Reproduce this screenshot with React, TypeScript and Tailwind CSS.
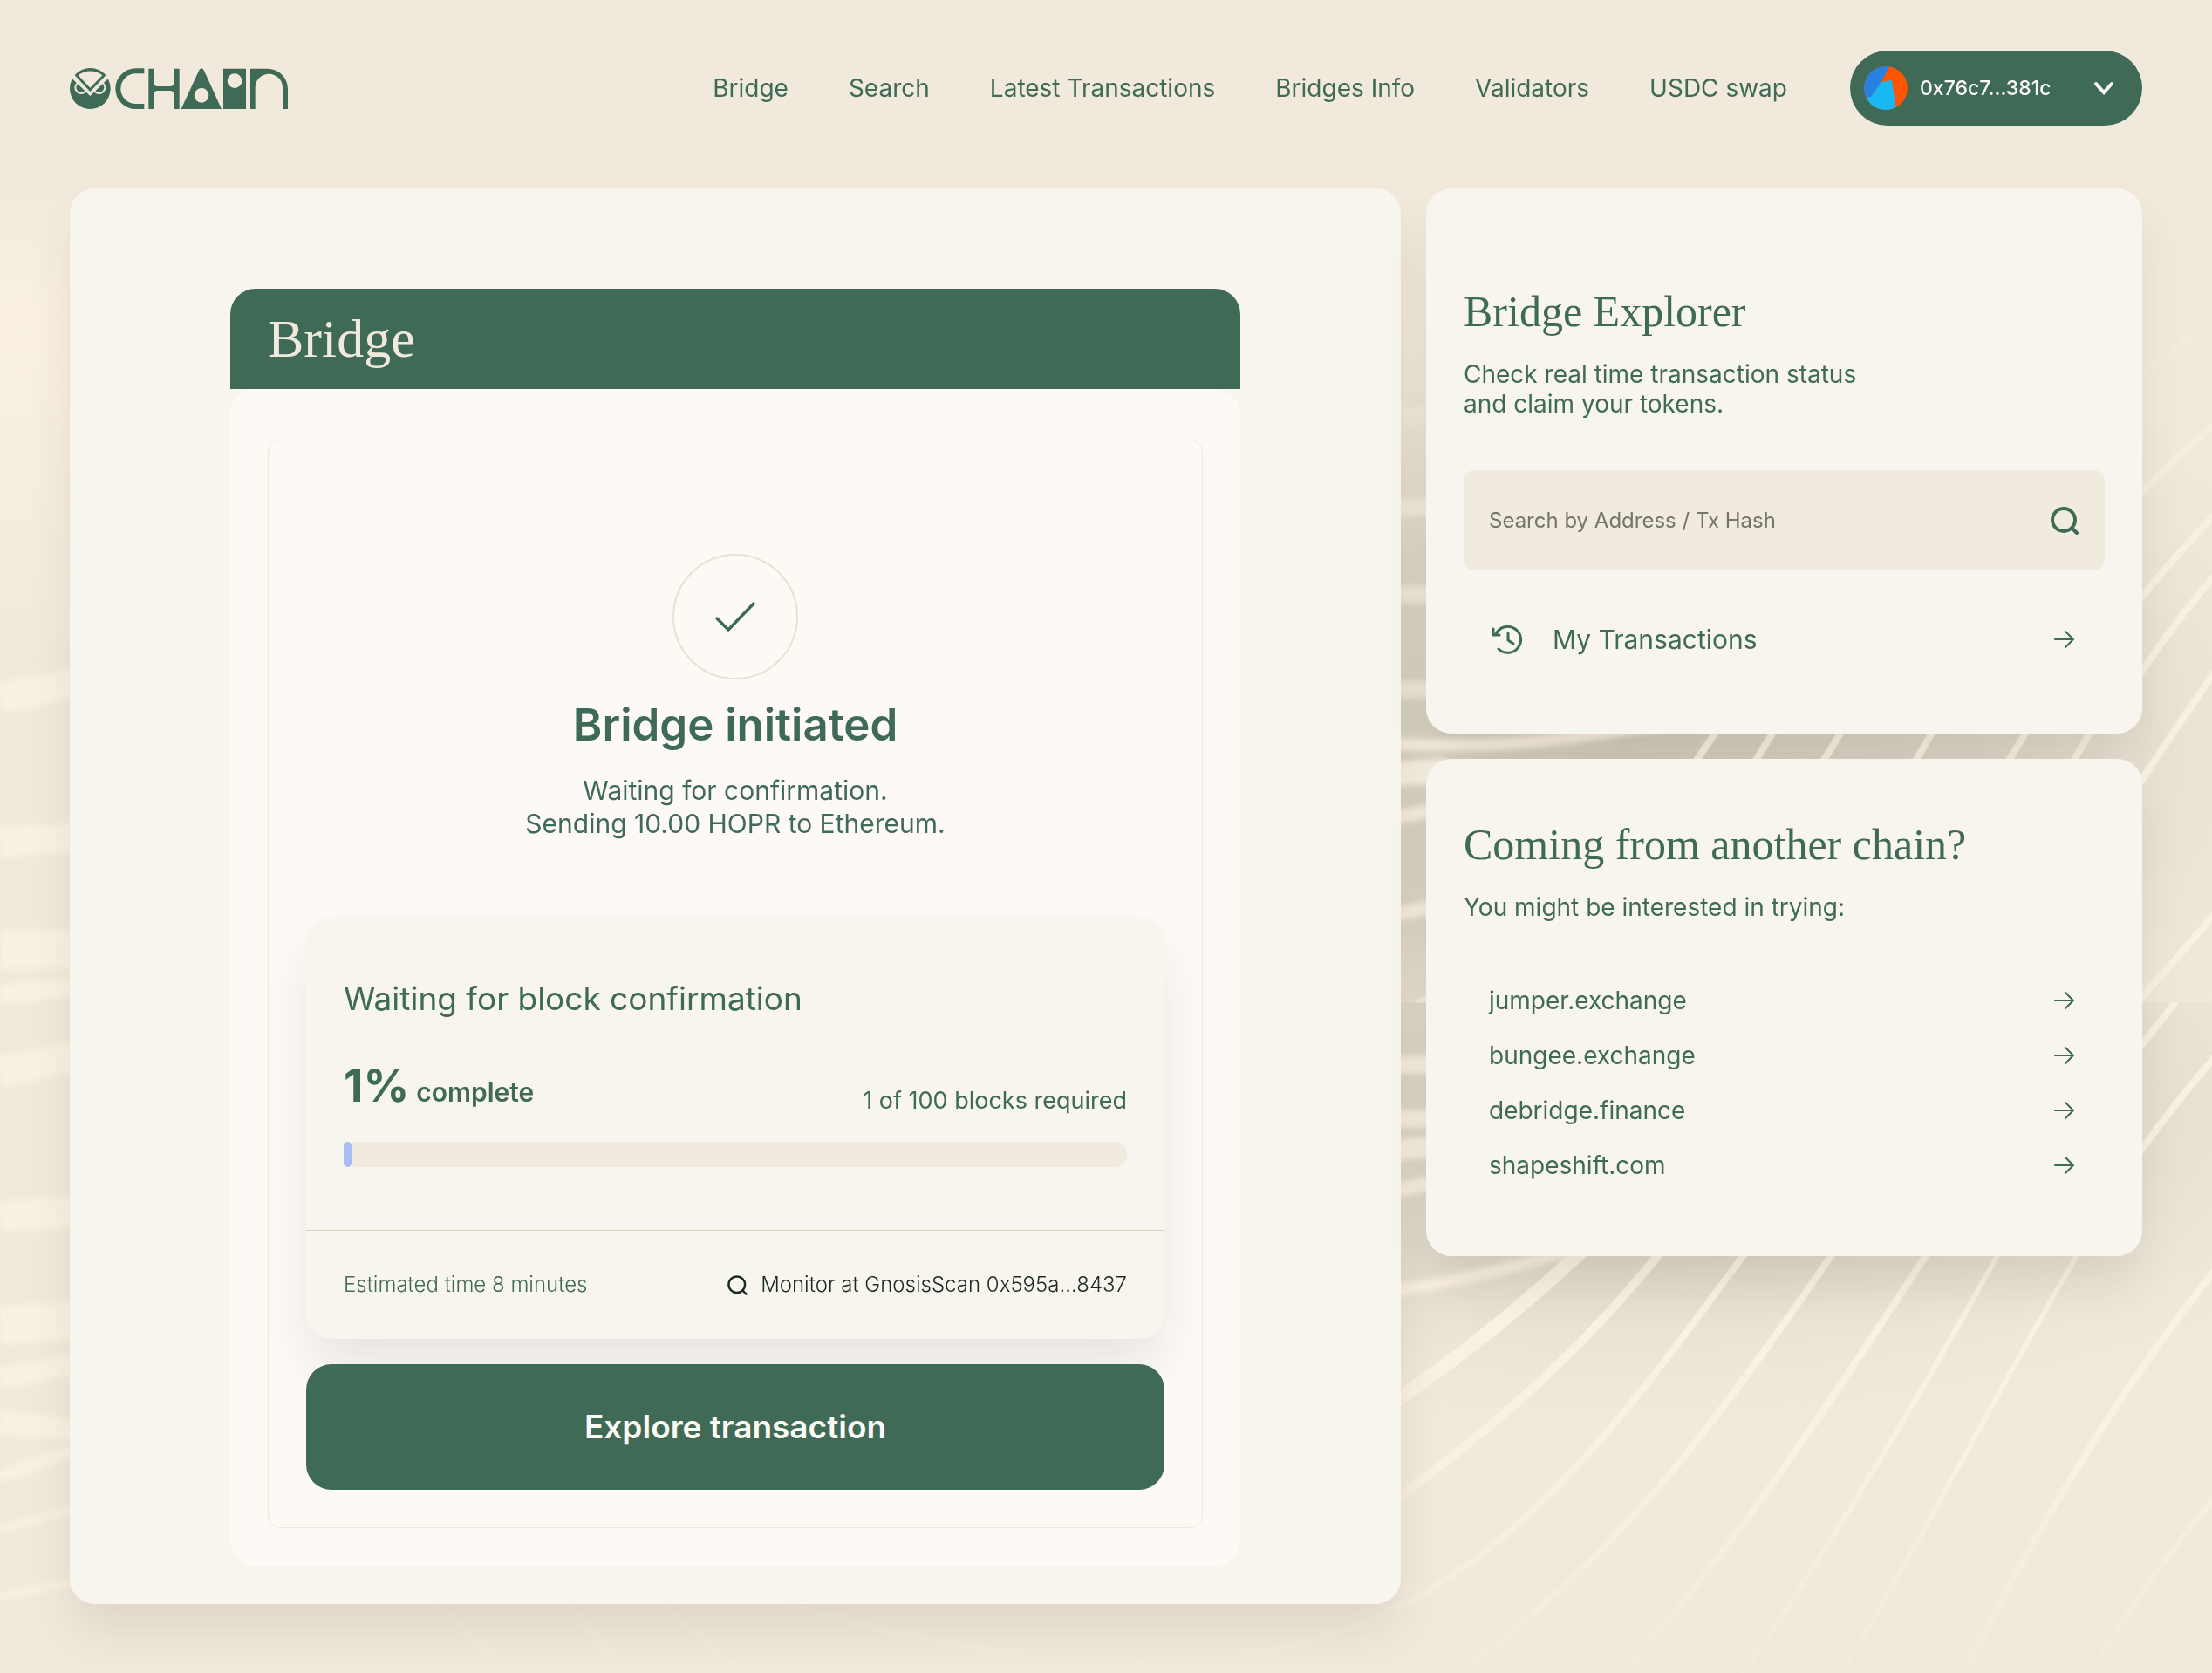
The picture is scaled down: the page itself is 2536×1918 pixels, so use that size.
import React from "react";

const navLinks = ["Bridge", "Search", "Latest Transactions", "Bridges Info", "Validators", "USDC swap"];
const exchanges = ["jumper.exchange", "bungee.exchange", "debridge.finance", "shapeshift.com"];

function Backdrop() {
  return (
    <svg
      className="absolute inset-0 h-full w-full"
      viewBox="0 0 2536 1918"
      preserveAspectRatio="xMidYMin slice"
      aria-hidden="true"
    >
      <defs>
        <radialGradient id="shadeA">
          <stop offset="0" stopColor="#c9c4b5" stopOpacity="0.85" />
          <stop offset="0.5" stopColor="#cfc9bb" stopOpacity="0.6" />
          <stop offset="1" stopColor="#e6dfd0" stopOpacity="0" />
        </radialGradient>
        <linearGradient id="fadeLines" x1="0" y1="0" x2="0" y2="1918" gradientUnits="userSpaceOnUse">
          <stop offset="0.14" stopColor="#f9f1e3" stopOpacity="0" />
          <stop offset="0.34" stopColor="#f9f1e3" stopOpacity="0.9" />
          <stop offset="0.85" stopColor="#f9f1e3" stopOpacity="1" />
          <stop offset="1" stopColor="#f7efe1" stopOpacity="0.3" />
        </linearGradient>
        <linearGradient id="warm" x1="0" y1="0" x2="0" y2="1">
          <stop offset="0" stopColor="#faf1e2" stopOpacity="0" />
          <stop offset="0.3" stopColor="#faf1e2" stopOpacity="0.9" />
          <stop offset="1" stopColor="#faf1e2" stopOpacity="0" />
        </linearGradient>
        <filter id="soft" x="-10%" y="-10%" width="120%" height="120%">
          <feGaussianBlur stdDeviation="3" />
        </filter>
        <clipPath id="upper">
          <rect x="0" y="0" width="2536" height="1149" />
        </clipPath>
        <clipPath id="lower">
          <rect x="0" y="1149" width="2536" height="769" />
        </clipPath>
      </defs>
      <rect width="2536" height="1918" fill="#f1eadc" />
      <rect y="200" width="80" height="560" fill="url(#warm)" />
      <g clipPath="url(#upper)">
        <ellipse cx="1860" cy="850" rx="880" ry="520" fill="url(#shadeA)" />
      </g>
      <g clipPath="url(#lower)">
        <ellipse cx="1860" cy="1260" rx="1000" ry="380" fill="url(#shadeA)" opacity="0.8" />
      </g>
      <g filter="url(#soft)" fill="none" stroke="#faf2e4" opacity="0.85">
        <path d="M0 800L90 782" strokeWidth="34" />
        <path d="M0 965L90 960" strokeWidth="34" />
        <path d="M0 1088L90 1088" strokeWidth="44" />
        <path d="M0 1140L90 1130" strokeWidth="22" />
        <path d="M0 1228L90 1210" strokeWidth="34" />
        <path d="M0 1394L90 1388" strokeWidth="34" />
        <path d="M0 1518L90 1514" strokeWidth="44" />
        <path d="M0 1580L90 1562" strokeWidth="24" />
        <path d="M0 1630L90 1638" strokeWidth="26" />
        <path d="M0 1692L90 1660" strokeWidth="14" />
        <path d="M0 1752L90 1728" strokeWidth="8" />
        <path d="M0 1830L90 1812" strokeWidth="8" />
        <path d="M1600 476h50" strokeWidth="20" opacity="0.4" />
        <path d="M1600 581h50M1600 681h50M1600 790h50" strokeWidth="20" opacity="0.75" />
        <path d="M1590 852Q1700 858 1800 845T1960 820" strokeWidth="14" />
        <path d="M1590 888L1660 882" strokeWidth="28" />
        <path d="M1590 938L1650 928M1590 1049L1650 1038" strokeWidth="16" />
        <path d="M1590 1220h60M1590 1282h60" strokeWidth="20" />
        <path d="M1590 1319L1650 1313" strokeWidth="24" />
        <path d="M1590 1366L1650 1354" strokeWidth="16" />
        <path d="M1590 1480Q1700 1465 1820 1426" strokeWidth="14" />
      </g>
      <g fill="none" stroke="url(#fadeLines)" strokeWidth="8">
        <path d="M2440 440Q2490 400 2540 368" />
        <path d="M2440 580Q2490 525 2540 486" />
        <path d="M2440 702Q2490 640 2540 588" />
        <path d="M2440 792Q2490 715 2540 658" />
        <path d="M2440 916Q2490 840 2540 768" />
        <path d="M1973 830L1935 885M2038 830L2004 885M2116 830L2082 885M2220 830L2188 885M2328 830L2294 885M2401 830L2369 885" />
        <path d="M2440 1160L2540 1046" clipPath="url(#upper)" />
        <path d="M1620 1149L1640 1136V1149Z" fill="#f9f1e3" stroke="none" opacity="0.6" />
        <path d="M2500 1140L2440 1216" clipPath="url(#lower)" />
        <path d="M2540 1209Q2480 1280 2440 1338" />
        <path d="M1600 1605Q1710 1530 1815 1432" strokeWidth="16" />
        <path d="M1600 1718C1720 1630 1820 1540 1902 1436" strokeWidth="10" />
        <path d="M1600 1843C1760 1765 1880 1600 2000 1436" />
        <path d="M1670 1918C1850 1790 1960 1640 2101 1436" />
        <path d="M1858 1918C1975 1790 2070 1650 2209 1436" />
        <path d="M1998 1918C2100 1770 2200 1600 2291 1436" strokeWidth="6" />
        <path d="M2110 1918C2200 1770 2280 1610 2382 1436" strokeWidth="6" />
        <path d="M2250 1918C2330 1760 2430 1590 2540 1454" />
        <path d="M2395 1918Q2460 1810 2540 1714" strokeWidth="6" />
        <path d="M500 1838L590 1918M650 1838L720 1918M760 1838L850 1918M900 1838Q1360 1970 1606 1838" opacity="0.6" />
      </g>
    </svg>
  );
}

function Logo() {
  return (
    <svg className="h-[47px] w-[250px]" viewBox="60 80 750 141" role="img" aria-label="0CHAIN">
      <g fill="#3f6a56">
        <circle cx="130" cy="151" r="70" />
        <g stroke="#f1eadc" strokeWidth="6">
          <circle cx="99" cy="147" r="20" />
          <circle cx="161" cy="147" r="20" />
        </g>
        <path d="M64 106L130 170L196 106" fill="none" stroke="#f1eadc" strokeWidth="9" />
        <path d="M60 70H200V100L130 164L60 100Z" fill="#f1eadc" />
        <path d="M77 105C105 72 156 72 184 105L130 161Z" />
        <path d="M89 105C112 86 149 86 172 105L130 148Z" fill="#f1eadc" />
        <path d="M121 158L130 175L139 158L130 166Z" fill="#f1eadc" />
        <path d="M316 90H287A61 61 0 0 0 287 212H316" fill="none" stroke="#3f6a56" strokeWidth="18" />
        <path d="M331 82H348V128Q348 143 363 143H404Q419 143 419 128V82H437V221H419V173Q419 158 404 158H363Q348 158 348 173V221H331Z" />
        <path
          fillRule="evenodd"
          d="M443 221L505 87Q513 75 521 87L582 221ZM513 149A25 25 0 1 0 513 199A25 25 0 1 0 513 149Z"
        />
        <path fillRule="evenodd" d="M588 82H666V221H588ZM627 99A25 25 0 1 0 627 149A25 25 0 1 0 627 99Z" />
        <path d="M681 82H740A70 70 0 0 1 810 152V221H792V147A47 47 0 0 0 698 147V221H681Z" />
      </g>
    </svg>
  );
}

function Avatar() {
  return (
    <svg className="size-[50px]" viewBox="0 0 50 50" aria-hidden="true">
      <clipPath id="round">
        <circle cx="25" cy="25" r="25" />
      </clipPath>
      <g clipPath="url(#round)">
        <rect width="50" height="50" fill="#ff5500" />
        <path d="M0 0H29L20 18L8 36L0 40Z" fill="#2a80e0" />
        <path d="M20 18L32 16L37 50H0V36L8 35Z" fill="#18b8f2" />
      </g>
    </svg>
  );
}

function ArrowRight() {
  return (
    <svg className="size-6" viewBox="0 0 24 24" fill="none" stroke="currentColor" strokeWidth="2" aria-hidden="true">
      <path d="M1 12H22M13 3L22 12L13 21" strokeLinecap="round" strokeLinejoin="round" />
    </svg>
  );
}

function SearchIcon({ className }: { className: string }) {
  return (
    <svg className={className} viewBox="0 0 32 32" fill="none" stroke="currentColor" aria-hidden="true">
      <circle cx="15" cy="15" r="13" />
      <path d="M24.500 24.500L30 30" strokeLinecap="round" />
    </svg>
  );
}

const shadow = "shadow-[0_34px_56px_-6px_rgba(60,50,30,0.11)]";

export default function App() {
  return (
    <div className="relative min-h-screen bg-[#f1eadc] font-['Inter',sans-serif] text-[#3f6a56]">
      <Backdrop />
      <div className="relative px-20 pb-20">
        <header className="flex items-center justify-between pt-[58px] pb-[72px]">
          <a href="#home">
            <Logo />
          </a>
          <div className="flex items-center gap-[72px]">
            <nav className="flex items-center gap-[69px] text-[28px] leading-9">
              {navLinks.map((label) => (
                <a key={label} href="#nav">
                  {label}
                </a>
              ))}
            </nav>
            <button className="flex h-[86px] w-[335px] items-center rounded-full bg-[#3f6a56] pr-8 pl-4 text-[#fdfaf5]">
              <Avatar />
              <span className="ml-3.5 text-[23px] font-medium">0x76c7...381c</span>
              <svg className="ml-auto size-6" viewBox="0 0 24 24" fill="none" stroke="currentColor" strokeWidth="4" aria-hidden="true">
                <path d="M3 7L12 17L21 7" strokeLinecap="round" />
              </svg>
            </button>
          </div>
        </header>

        <main className="grid grid-cols-[minmax(0,1526fr)_minmax(0,821fr)] items-start gap-[29px]">
          <section className={`rounded-[29px] bg-[#f8f5ee] px-[184px] pt-[115px] pb-11 ${shadow}`}>
            <h1 className="rounded-t-[29px] bg-[#3f6a56] px-[43px] font-['Liberation_Serif',serif] text-[62px] leading-[115px] text-[#f1eadc]">
              Bridge
            </h1>
            <div className="rounded-[29px] bg-[#fdfaf5] px-[43px] pt-[58px] pb-[43px]">
              <div className="flex flex-col rounded-[14px] border border-[#f1eadc] px-[43px] pt-[130px] pb-[43px]">
                <div className="flex flex-col items-center text-center">
                  <div className="flex size-36 items-center justify-center rounded-full border-2 border-[#e8e2d4]">
                    <svg className="h-9 w-12" viewBox="0 0 48 36" fill="none" stroke="currentColor" strokeWidth="3.500" aria-hidden="true">
                      <path d="M3 20L16 33L45 3" strokeLinecap="round" strokeLinejoin="round" />
                    </svg>
                  </div>
                  <h2 className="mt-6 text-[51px] leading-[56px] font-semibold">Bridge initiated</h2>
                  <p className="mt-7 text-[30px] leading-[38px]">
                    Waiting for confirmation.
                    <br />
                    Sending 10.00 HOPR to Ethereum.
                  </p>
                </div>

                <div className="mt-[89px] rounded-[29px] bg-[#f8f5ee] shadow-[0_34px_56px_-6px_rgba(40,40,60,0.1)]">
                  <div className="px-[43px] pt-[69px] pb-[72px]">
                    <h3 className="text-[37px] leading-[48px]">Waiting for block confirmation</h3>
                    <div className="mt-10 flex items-end justify-between">
                      <p className="flex items-baseline gap-2 text-[52px] leading-[72px] font-bold">
                        1% <span className="text-[30px] leading-none font-semibold">complete</span>
                      </p>
                      <p className="text-[27px] leading-[38px]">1 of 100 blocks required</p>
                    </div>
                    <div
                      role="progressbar"
                      aria-label="Block confirmations"
                      aria-valuenow={1}
                      aria-valuemin={0}
                      aria-valuemax={100}
                      className="mt-7 h-[29px] rounded-[14px] bg-[#f1eadf]"
                    >
                      <div className="h-full rounded-[5px] bg-[#a9bdf0]" style={{ width: "1%" }} />
                    </div>
                  </div>
                  <div className="flex h-[125px] items-center justify-between border-t border-[#d8d2ba] px-[43px] text-[24px]">
                    <p className="font-light">Estimated time 8 minutes</p>
                    <a href="#monitor" className="flex items-center gap-[15px] font-light text-[#1d2a24]">
                      <SearchIcon className="size-[23px] stroke-[3.500]" />
                      Monitor at GnosisScan 0x595a...8437
                    </a>
                  </div>
                </div>

                <button className="relative mt-[29px] h-36 rounded-[29px] bg-[#3f6a56] text-[37px] font-semibold text-[#fdfaf5]">
                  Explore transaction
                </button>
              </div>
            </div>
          </section>

          <div className="flex flex-col gap-[29px]">
            <section className={`rounded-[29px] bg-[#f8f5ee] px-[43px] pt-28 pb-[79px] ${shadow}`}>
              <h2 className="font-['Liberation_Serif',serif] text-[50px] leading-[58px]">Bridge Explorer</h2>
              <p className="mt-[26px] text-[28px] leading-[34px]">
                Check real time transaction status
                <br />
                and claim your tokens.
              </p>
              <form className="mt-[59px] flex h-[115px] items-center rounded-xl bg-[#f1eadf] pr-[30px] pl-[29px]">
                <input
                  type="search"
                  aria-label="Search by Address / Tx Hash"
                  placeholder="Search by Address / Tx Hash"
                  className="min-w-0 flex-1 bg-transparent text-[24px] outline-none placeholder:text-[#757568]"
                />
                <button type="button" aria-label="Search">
                  <SearchIcon className="size-8 stroke-[4]" />
                </button>
              </form>
              <a href="#transactions" className="mt-[50px] flex h-[58px] items-center pr-[34px] pl-8">
                <svg className="size-9" viewBox="0 0 36 36" fill="none" stroke="currentColor" strokeWidth="3" strokeLinecap="round" strokeLinejoin="round" aria-hidden="true">
                  <path d="M8 29A15 15 0 1 0 5 12" />
                  <path d="M2 6V13H9" />
                  <path d="M19 11V19L25 23" />
                </svg>
                <span className="ml-[34px] text-[30px]">My Transactions</span>
                <span className="ml-auto">
                  <ArrowRight />
                </span>
              </a>
            </section>

            <section className={`rounded-[29px] bg-[#f8f5ee] px-[43px] pt-[69px] pb-[73px] ${shadow}`}>
              <h2 className="font-['Liberation_Serif',serif] text-[50px] leading-[58px]">Coming from another chain?</h2>
              <p className="mt-[26px] text-[28px] leading-[34px]">You might be interested in trying:</p>
              <ul className="mt-[58px]">
                {exchanges.map((name) => (
                  <li key={name}>
                    <a href="#exchange" className="flex h-[63px] items-center justify-between pr-[34px] pl-[29px] text-[28px]">
                      {name}
                      <ArrowRight />
                    </a>
                  </li>
                ))}
              </ul>
            </section>
          </div>
        </main>
      </div>
    </div>
  );
}
